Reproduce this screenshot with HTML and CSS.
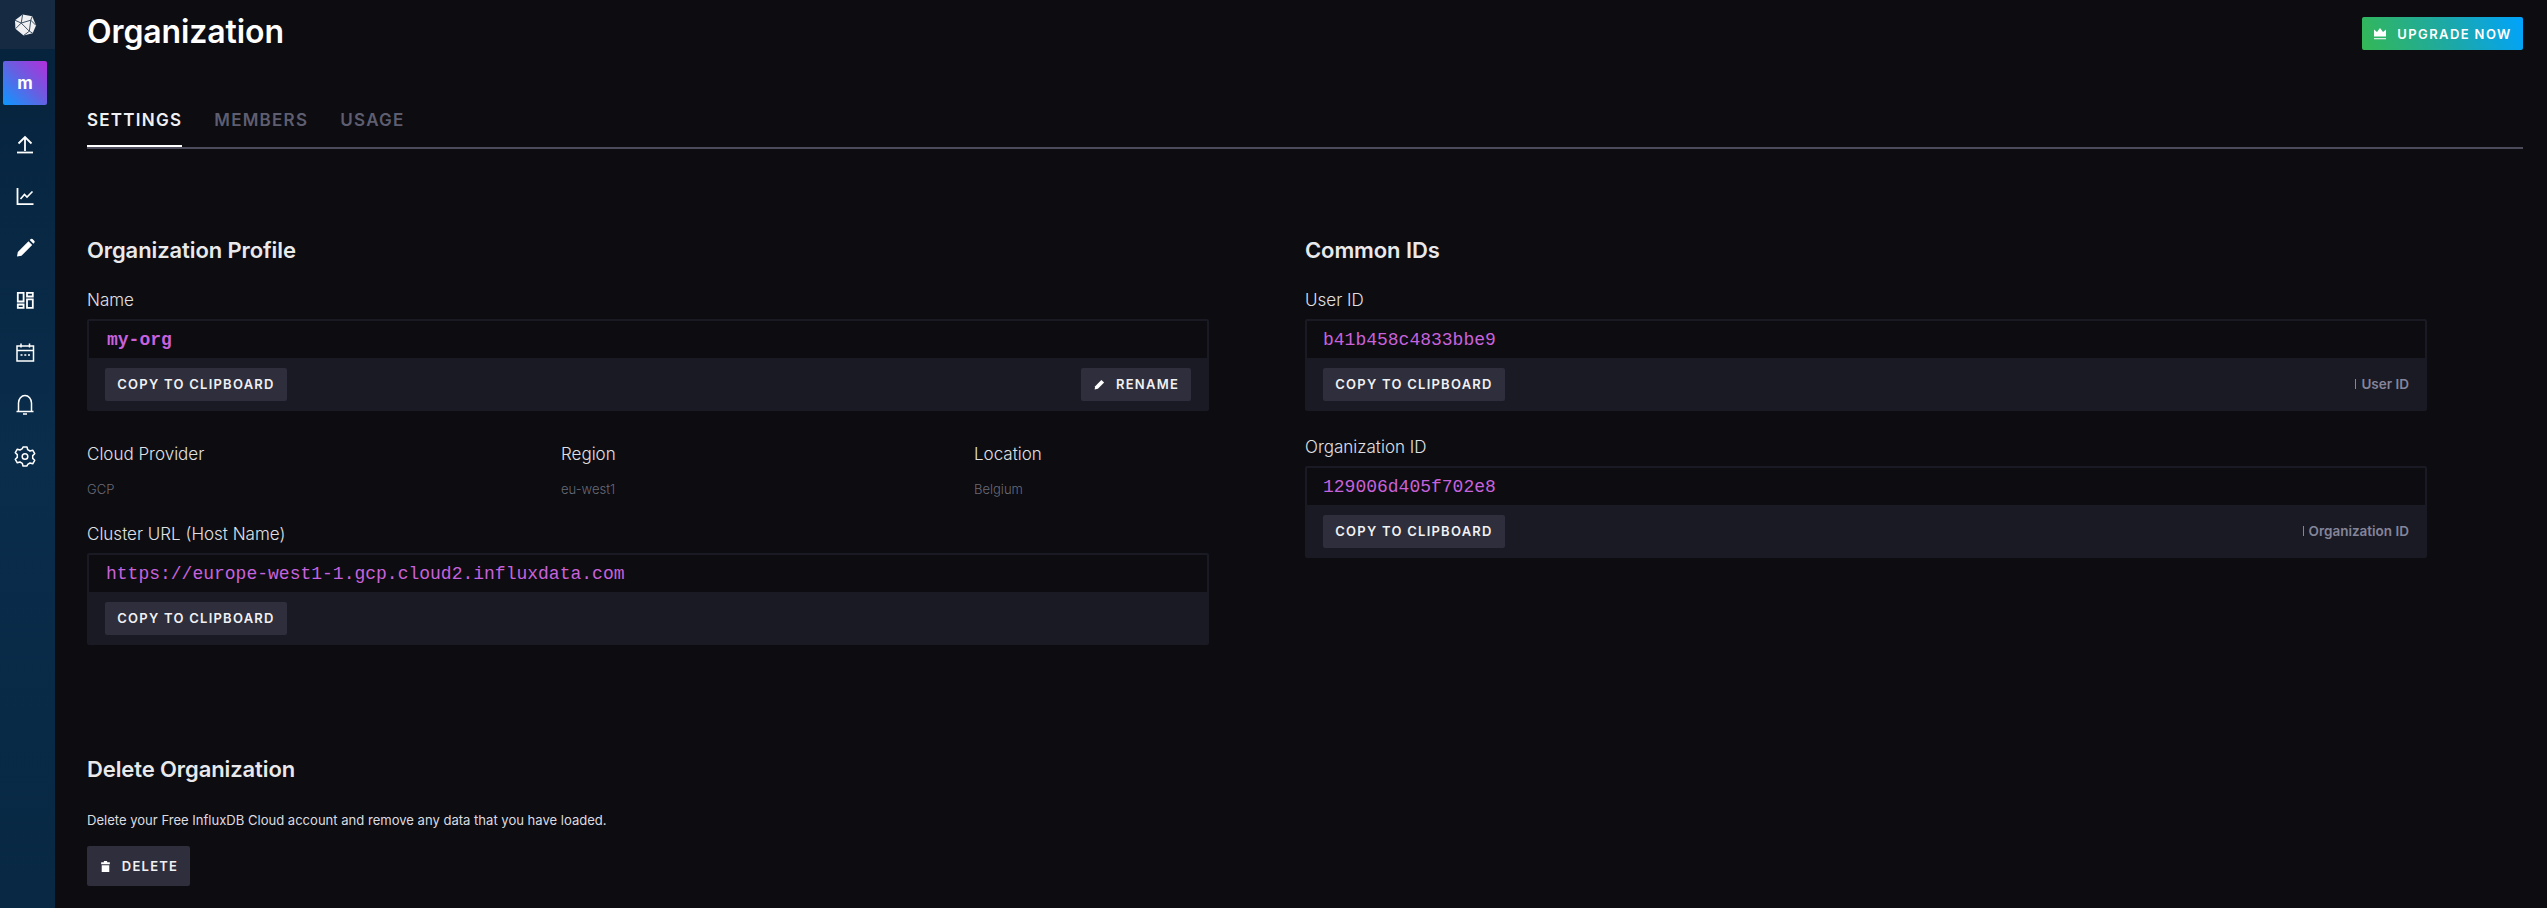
FILE: index.html
```html
<!DOCTYPE html>
<html lang="en">
<head>
<meta charset="utf-8">
<title>Organization</title>
<link rel="stylesheet" href="styles.css">
</head>
<body>
<div class="app">
  <nav class="nav">
    <div class="nav-logo">
      <svg class="logo" viewBox="0 0 24 24"><polygon points="9,1.5 19,3.5 23,13 19.5,21 10,23.5 1.5,16.5 1,7.5" fill="#f1f1f3"/><path d="M9 1.5 L7.5 10.5 L1 7.5 M7.5 10.5 L17.5 7.5 L19 3.5 M17.5 7.5 L23 13 M17.5 7.5 L16 19 L7.5 10.5 M16 19 L19.5 21 M16 19 L10 23.5 M7.5 10.5 L1.5 16.5" fill="none" stroke="#33485c" stroke-width="1"/></svg>
    </div>
    <div class="avatar">m</div>
    <ul class="nav-list">
      <li class="nav-item"><svg class="nav-icon" viewBox="0 0 24 24"><path d="M12 19V6M5.5 11.5 12 5l6.500 6.500" fill="none" stroke="#fff" stroke-width="1.800"/><path d="M4 20.500h16" stroke="#fff" stroke-width="1.800"/></svg></li>
      <li class="nav-item"><svg class="nav-icon" viewBox="0 0 24 24"><path d="M4.500 4v16.200H20.500" fill="none" stroke="#fff" stroke-width="1.800"/><path d="M7.500 15l4-4.500 2.500 2.500 5.500-5.500" fill="none" stroke="#fff" stroke-width="1.600"/></svg></li>
      <li class="nav-item"><svg class="nav-icon" viewBox="0 0 24 24"><path d="M4 20.500 4.800 16 15.500 5.300 19.200 9 8.500 19.700ZM16.700 4.100l1.200-1a1.200 1.200 0 0 1 1.600 0l1.900 1.900a1.200 1.200 0 0 1 0 1.600l-1 1.200Z" fill="#fff"/></svg></li>
      <li class="nav-item"><svg class="nav-icon" viewBox="0 0 24 24"><path d="M4.800 4.800h5.800v8.700H4.800ZM14 4.800h5.800v3.700H14ZM4.800 16.500h5.800v3.300H4.800ZM14 11.300h5.800v8.500H14Z" fill="none" stroke="#fff" stroke-width="1.800"/></svg></li>
      <li class="nav-item"><svg class="nav-icon" viewBox="0 0 24 24"><path d="M4 6h16.500v15H4Z" fill="none" stroke="#fff" stroke-width="1.500"/><path d="M4 10.500h16.500" stroke="#fff" stroke-width="1.500"/><path d="M8 3.500v4M16.500 3.500v4" stroke="#fff" stroke-width="1.500"/><path d="M7.500 15h2M11.300 15h2M15 15h2" stroke="#fff" stroke-width="1.500"/></svg></li>
      <li class="nav-item"><svg class="nav-icon" viewBox="0 0 24 24"><path d="M3.500 19.500h17M5.500 19.500V11a6.500 7.500 0 0 1 13 0v8.500" fill="none" stroke="#fff" stroke-width="1.500"/><path d="M10 22h4" stroke="#fff" stroke-width="1.500"/></svg></li>
      <li class="nav-item"><svg class="nav-icon" viewBox="0 0 24 24"><path d="M10 3h4l.7 2.700 2.300 1.300 2.700-.8 2 3.500-2 1.900v2.800l2 1.900-2 3.500-2.700-.8-2.300 1.300L14 22h-4l-.7-2.700L7 18l-2.700.8-2-3.500 2-1.900v-2.800l-2-1.900 2-3.500L7 6l2.300-1.300Z" fill="none" stroke="#fff" stroke-width="1.500" stroke-linejoin="round"/><circle cx="12" cy="12.500" r="2.800" fill="none" stroke="#fff" stroke-width="1.500"/></svg></li>
    </ul>
  </nav>
  <main class="main">
    <header class="page-header">
      <h1 class="page-title">Organization</h1>
      <button class="btn-upgrade"><svg class="crown" viewBox="0 0 14 14"><path d="M1 2.500 4 5 7 1l3 4 3-2.500V9.500H1Z" fill="#fff"/><path d="M1 11h12v1.300H1Z" fill="#fff" opacity=".8"/></svg>UPGRADE NOW</button>
    </header>
    <div class="tabs">
      <a class="tab tab-active">SETTINGS</a>
      <a class="tab">MEMBERS</a>
      <a class="tab">USAGE</a>
    </div>
    <div class="columns">
      <section>
        <h2 class="section-title">Organization Profile</h2>
        <div class="label">Name</div>
        <div class="code-card">
          <div class="code code-bold">my-org</div>
          <div class="code-actions">
            <button class="btn">COPY TO CLIPBOARD</button>
            <button class="btn btn-rename"><svg class="btn-icon" viewBox="0 0 24 24"><path d="M3 21l1-6L15.500 3.500l5 5L9 20Z" fill="#fff"/></svg>RENAME</button>
          </div>
        </div>
        <div class="meta">
          <div><div class="label">Cloud Provider</div><div class="meta-value">GCP</div></div>
          <div><div class="label">Region</div><div class="meta-value">eu-west1</div></div>
          <div><div class="label">Location</div><div class="meta-value">Belgium</div></div>
        </div>
        <div class="label label-cluster">Cluster URL (Host Name)</div>
        <div class="code-card">
          <div class="code code-url">https://europe-west1-1.gcp.cloud2.influxdata.com</div>
          <div class="code-actions"><button class="btn">COPY TO CLIPBOARD</button></div>
        </div>
      </section>
      <section>
        <h2 class="section-title">Common IDs</h2>
        <div class="label">User ID</div>
        <div class="code-card">
          <div class="code">b41b458c4833bbe9</div>
          <div class="code-actions">
            <button class="btn">COPY TO CLIPBOARD</button>
            <span class="hint">User ID</span>
          </div>
        </div>
        <div class="label label-org">Organization ID</div>
        <div class="code-card">
          <div class="code">129006d405f702e8</div>
          <div class="code-actions">
            <button class="btn">COPY TO CLIPBOARD</button>
            <span class="hint">Organization ID</span>
          </div>
        </div>
      </section>
    </div>
    <section class="delete">
      <h2 class="section-title">Delete Organization</h2>
      <p class="delete-text">Delete your Free InfluxDB Cloud account and remove any data that you have loaded.</p>
      <button class="btn btn-delete"><svg class="btn-icon" viewBox="0 0 24 24"><path d="M9 2h6v2h5v4H4V4h5ZM5 9.500h14V22H5Z" fill="#fff"/></svg>DELETE</button>
    </section>
  </main>
</div>
</body>
</html>
```
FILE: styles.css
```css
* { box-sizing: border-box; }
html, body { margin: 0; height: 100%; background: #0c0c11; overflow: hidden; }
body { font-family: "Inter", "Liberation Sans", sans-serif; color: #e7e8eb; }
.app { display: flex; height: 908px; }

.nav { width: 55px; flex: none; background: linear-gradient(180deg, #06223b 0%, #0a2d4c 50%, #082843 100%); }
.nav-logo { height: 49px; background: #162b41; display: flex; align-items: center; padding-left: 14px; }
.logo { width: 23px; height: 23px; margin-top: -1px; }
.avatar { width: 44px; height: 44px; margin: 12px 0 0 3px; border-radius: 2px; background: linear-gradient(45deg, #0c98ff 0%, #6c5ce0 55%, #b22fdc 100%); color: #fff; font-weight: 700; font-size: 17px; display: flex; align-items: center; justify-content: center; }
.nav-list { list-style: none; margin: 13px 0 0; padding: 0 5px 0 0; }
.nav-item { height: 52px; display: flex; align-items: center; justify-content: center; }
.nav-icon { width: 24px; height: 24px; display: block; }

.main { flex: 1; padding: 0 24px 0 32px; min-width: 0; }
.page-header { height: 66px; display: flex; justify-content: space-between; padding-top: 17px; }
.page-title { margin: -1px 0 0; font-size: 32px; line-height: 32px; font-weight: 600; color: #fff; letter-spacing: -.1px; }
.btn-upgrade { height: 33px; width: 161px; border: 0; border-radius: 2px; background: linear-gradient(70deg, #34b855 0%, #1ca8a8 55%, #00a3ff 100%); color: #fff; font: 600 13px "Inter", sans-serif; letter-spacing: 1.400px; display: flex; align-items: center; justify-content: center; gap: 10px; padding: 0; }
.crown { width: 14px; height: 14px; }

.tabs { height: 83px; display: flex; gap: 32px; padding-top: 41px; border-bottom: 2px solid #4b4b5b; }
.tab { font-size: 17px; line-height: 26px; font-weight: 600; letter-spacing: 1.250px; color: #5e5e70; height: 40px; }
.tab-active { color: #f1f1f3; border-bottom: 2px solid #fff; }

.columns { display: grid; grid-template-columns: 1122px 1122px; column-gap: 96px; padding-top: 89px; }
.section-title { margin: 0; font-size: 22px; line-height: 24px; font-weight: 600; color: #e9e9ec; height: 24px; letter-spacing: -.1px; }
.label { font-size: 17px; line-height: 22px; font-weight: 300; color: #e0e0e3; margin-top: 27px; height: 22px; }
.code-card { margin-top: 8px; background: #1a1a25; border-radius: 2px; height: 92px; padding: 2px 2px 0 2px; display: flex; flex-direction: column; }
.code { height: 37px; background: #0c0c11; padding-left: 16px; font-family: "Liberation Mono", monospace; font-size: 18px; line-height: 39px; color: #c862dc; }
.code-bold { font-weight: 700; padding-left: 18px; }
.code-url { padding-left: 17px; }
.code-actions { flex: 1; display: flex; justify-content: space-between; align-items: center; padding: 0 16px 1px; }
.btn { height: 33px; border: 0; border-radius: 2px; background: #2e2e3c; color: #f1f1f3; font: 600 13px "Inter", sans-serif; letter-spacing: 1.250px; padding: 0; width: 182px; display: inline-flex; align-items: center; justify-content: center; }
.btn-rename { width: 110px; gap: 10px; }
.btn-icon { width: 13px; height: 13px; }
.hint { font-size: 13.500px; font-weight: 600; color: #85859a; display: inline-flex; align-items: center; }
.hint::before { content: ""; width: 1px; height: 10px; background: #85859a; margin-right: 5px; }

.meta { display: grid; grid-template-columns: 474px 413px 1fr; margin-top: 32px; }
.meta .label { margin-top: 0; }
.meta-value { font-size: 13px; line-height: 18px; color: #6a6a76; margin-top: 15px; font-weight: 300; }
.label-cluster { margin-top: 25px; }
.label-org { margin-top: 25px; }

.delete { margin-top: 112px; }
.delete-text { margin: 30px 0 0; font-size: 13.050px; line-height: 18px; font-weight: 400; color: #dcdce0; }
.btn-delete { width: 103px; height: 40px; margin-top: 17px; gap: 10px; }
```
